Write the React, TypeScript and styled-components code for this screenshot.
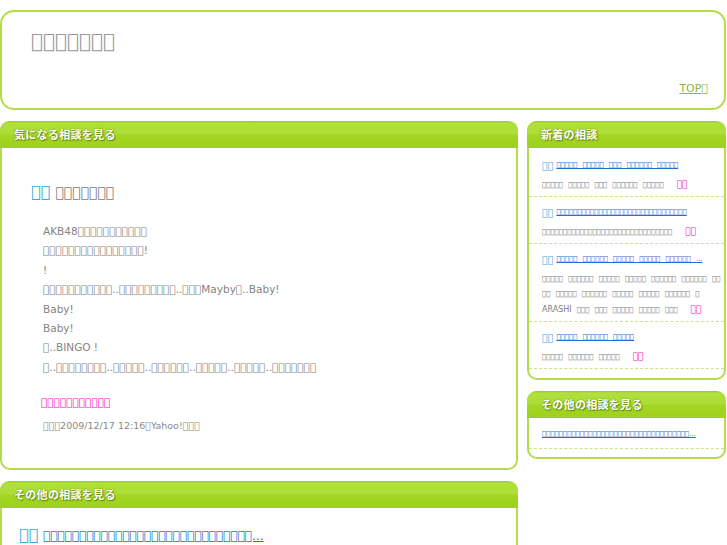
import React from 'react';
import styled, { createGlobalStyle } from 'styled-components';

// the page text shows up as missing-glyph boxes; '#' marks one such box
const t = (s: string) => s.replace(/#/g, '\uE000');

const GlobalStyle = createGlobalStyle`
  body {
    margin: 0;
    background: #fff;
    font-family: "DejaVu Sans", sans-serif;
    color: #808080;
  }
`;

const Page = styled.div`
  width: 727px;
  padding-top: 10px;
`;

const Masthead = styled.div`
  box-sizing: border-box;
  width: 726px;
  height: 100px;
  border: 2px solid #b4dc4b;
  border-radius: 14px;
  padding: 15px 16px 12px 29px;
  display: flex;
  flex-direction: column;
`;

const SiteTitle = styled.div`
  font-size: 20px;
  line-height: 28px;
  color: #9a9a9a;
`;

const TopNav = styled.div`
  margin-top: auto;
  text-align: right;
  font-size: 11px;
  line-height: 14px;

  a {
    color: #8bb838;
    text-decoration: underline;
  }
`;

const Columns = styled.div`
  display: flex;
  gap: 9px;
  margin-top: 11px;
`;

const Column = styled.div<{ $w: number }>`
  width: ${(p) => p.$w}px;
  display: flex;
  flex-direction: column;
  gap: 11px;
`;

const Card = styled.section``;

const CardHead = styled.h2`
  margin: 0;
  height: 27px;
  box-sizing: border-box;
  padding-left: 14px;
  border-radius: 9px 9px 0 0;
  background: linear-gradient(
    #93c91c 0,
    #b0df3e 2px,
    #aedd38 48%,
    #a3d523 52%,
    #9ed11d 100%
  );
  font-family: "Noto Sans CJK JP", sans-serif;
  font-size: 11px;
  font-weight: 700;
  line-height: 27px;
  color: #fff;
  text-shadow: 0 0 2px #5f8f0a, 1px 1px 1px rgba(60, 90, 0, 0.6);
  letter-spacing: 0.3px;
`;

const CardBody = styled.div<{ $pad: string }>`
  border: 2px solid #b4dc4b;
  border-top: none;
  border-radius: 0 0 10px 10px;
  padding: ${(p) => p.$pad};
`;

const Label = styled.span<{ $size: number }>`
  color: #3aa8de;
  font-size: ${(p) => p.$size}px;
  margin-right: ${(p) => Math.round(p.$size / 3)}px;
`;

const ArticleTitle = styled.h1`
  margin: 0;
  font-size: 14px;
  font-weight: 400;
  line-height: 20px;
  color: #7a7a7a;
`;

const Body = styled.p`
  margin: 20px 0 0;
  padding-left: 12px;
  font-size: 10.5px;
  line-height: 19.4px;
  color: #848484;
`;

const PinkLink = styled.a<{ $size: number }>`
  color: #ff00cc;
  font-size: ${(p) => p.$size}px;
  text-decoration: underline;
`;

const SourceLink = styled.div`
  margin-top: 16px;
  padding-left: 10px;
  line-height: 16px;
`;

const Meta = styled.div`
  margin-top: 8px;
  padding-left: 12px;
  font-size: 9.5px;
  line-height: 16px;
  color: #8a8a8a;
`;

const BlueLink = styled.a<{ $size: number }>`
  color: #1f6fd2;
  font-size: ${(p) => p.$size}px;
  text-decoration: underline;
`;

const Item = styled.div<{ $last?: boolean }>`
  padding: ${(p) => (p.$last ? '0 13px 5.5px' : '7px 8px 3.5px 13px')};
  border-bottom: 1px dashed #c6e480;
`;

const ItemTitle = styled.div`
  display: flex;
  align-items: center;
  height: 16px;
  white-space: nowrap;
  word-spacing: 3px;
`;

const ItemDesc = styled.div`
  margin-top: 4.5px;
  font-size: 7px;
  line-height: 15px;
  white-space: nowrap;
  word-spacing: 3px;
  color: #7d7d7d;

  ${PinkLink} {
    margin-left: 13px;
    line-height: 1;
  }
`;

const Latin = styled.span`
  font-size: 8px;
`;

const OtherTitle = styled.div`
  line-height: 20px;
`;

const news = [
  {
    title: '##### ##### ### ###### #####',
    desc: ['##### ##### ### ###### #####'],
  },
  {
    title: '###############################',
    desc: ['###############################'],
  },
  {
    title: '##### ###### ##### ##### ###### ...',
    desc: [
      '##### ###### ##### ##### ###### ###### ##',
      '## ##### ###### ##### ##### ###### #',
      '@ ### ### ##### ##### ###',
    ],
  },
  {
    title: '##### ###### #####',
    desc: ['##### ###### #####'],
  },
];

const lines = [
  'AKB48###########',
  '################!',
  '!',
  '###########..#########..###Mayby#..Baby!',
  'Baby!',
  'Baby!',
  '#..BINGO !',
  '#..########..#####..######..#####..#####..#######',
];

// '@' stands for the one latin word in a description
const descLine = (d: string) => {
  const [before, after] = d.split('@');
  if (after === undefined) return t(d);
  return (
    <>
      {t(before)}
      <Latin>ARASHI</Latin>
      {t(after)}
    </>
  );
};

export default function App() {
  return (
    <Page>
      <GlobalStyle />
      <Masthead>
        <SiteTitle>{t('#######')}</SiteTitle>
        <TopNav>
          <a href="#">{t('TOP#')}</a>
        </TopNav>
      </Masthead>

      <Columns>
        <Column $w={518}>
          <Card>
            <CardHead>気になる相談を見る</CardHead>
            <CardBody $pad="34px 29px 34px">
              <ArticleTitle>
                <Label $size={16}>{t('##')}</Label>
                {t('#######')}
              </ArticleTitle>
              <Body>
                {lines.map((l, i) => (
                  <React.Fragment key={i}>
                    {t(l)}
                    {i < lines.length - 1 && <br />}
                  </React.Fragment>
                ))}
              </Body>
              <SourceLink>
                <PinkLink $size={10.5} href="#">
                  {t('###########')}
                </PinkLink>
              </SourceLink>
              <Meta>{t('###2009/12/17 12:16#Yahoo!###')}</Meta>
            </CardBody>
          </Card>

          <Card>
            <CardHead>その他の相談を見る</CardHead>
            <CardBody $pad="17px 17px 40px">
              <OtherTitle>
                <Label $size={16}>{t('##')}</Label>
                <BlueLink $size={12} href="#">
                  {t('#############################...')}
                </BlueLink>
              </OtherTitle>
            </CardBody>
          </Card>
        </Column>

        <Column $w={199}>
          <Card>
            <CardHead>新着の相談</CardHead>
            <CardBody $pad="2px 0 9px">
              {news.map((n, i) => (
                <Item key={i}>
                  <ItemTitle>
                    <Label $size={9.5}>{t('##')}</Label>
                    <BlueLink $size={7} href="#">
                      {t(n.title)}
                    </BlueLink>
                  </ItemTitle>
                  <ItemDesc>
                    {n.desc.map((d, j) => (
                      <React.Fragment key={j}>
                        {descLine(d)}
                        {j < n.desc.length - 1 && <br />}
                      </React.Fragment>
                    ))}
                    <PinkLink $size={9} href="#">
                      {t('##')}
                    </PinkLink>
                  </ItemDesc>
                </Item>
              ))}
            </CardBody>
          </Card>

          <Card>
            <CardHead>その他の相談を見る</CardHead>
            <CardBody $pad="8px 0 8px">
              <Item $last>
                <ItemTitle>
                  <BlueLink $size={7} href="#">
                    {t('###################################...')}
                  </BlueLink>
                </ItemTitle>
              </Item>
            </CardBody>
          </Card>
        </Column>
      </Columns>
    </Page>
  );
}
